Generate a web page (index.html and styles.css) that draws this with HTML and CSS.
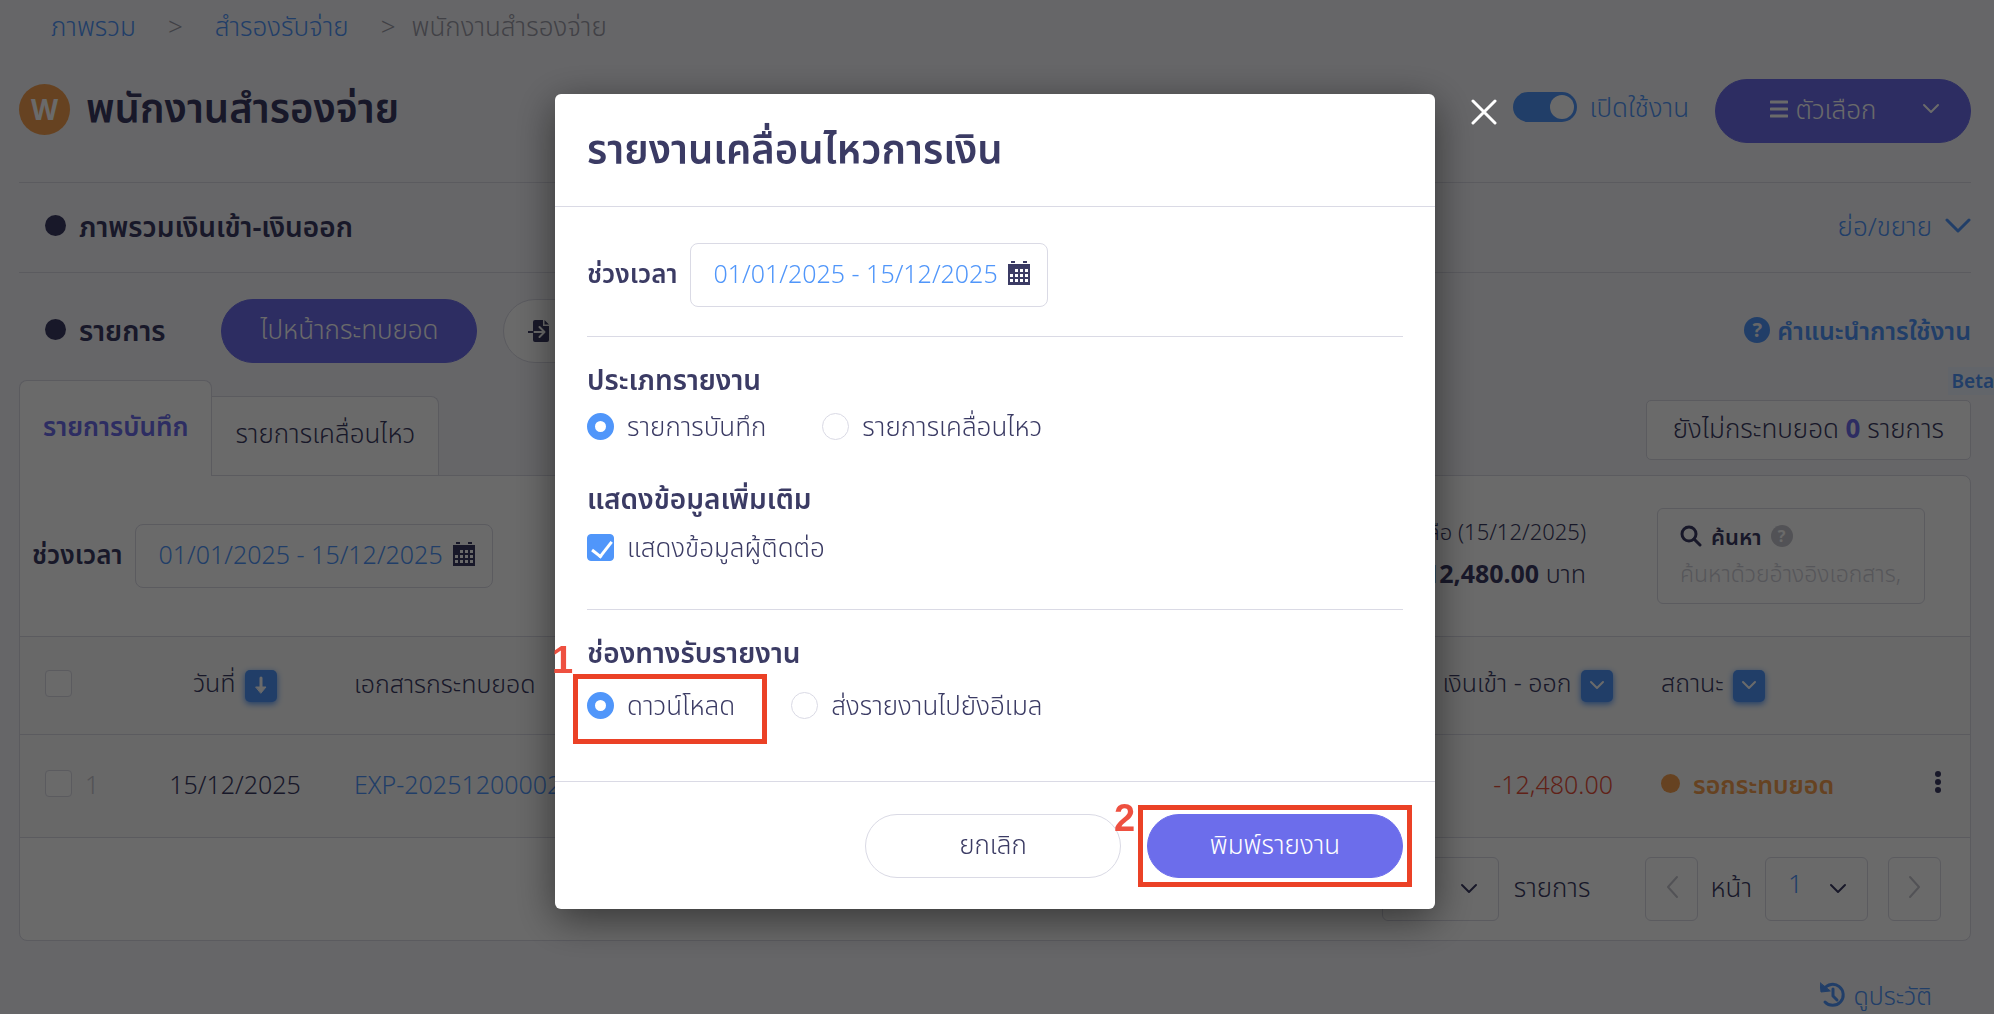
FILE: index.html
```html
<!DOCTYPE html>
<html lang="th">
<head>
    <meta charset="UTF-8">
    <meta name="viewport" content="width=device-width, initial-scale=1.0">
    <title>พนักงานสำรองจ่าย</title>
    <link rel="stylesheet" href="styles.css">
</head>
<body>

    <div class="page">
        <nav class="breadcrumb">
            <a href="#">ภาพรวม</a>
            <span class="sep">&gt;</span>
            <a href="#">สำรองรับจ่าย</a>
            <span class="sep last">&gt;</span>
            <span>พนักงานสำรองจ่าย</span>
        </nav>

        <header class="page-header">
            <span class="avatar">W</span>
            <h1>พนักงานสำรองจ่าย</h1>
            <label class="switch">
                <input type="checkbox" checked>
                <span>เปิดใช้งาน</span>
            </label>
            <button class="btn btn-primary btn-options" type="button">
                <svg width="18" height="18" viewBox="0 0 18 18"><path d="M1 2h16M1 9h16M1 16h16"/></svg>
                <span>ตัวเลือก</span>
                <svg class="caret" width="18" height="12" viewBox="0 0 18 12"><path d="M2 2l7 7 7-7"/></svg>
            </button>
        </header>

        <section class="section-row">
            <h2 class="bullet">ภาพรวมเงินเข้า-เงินออก</h2>
            <a class="toggle-link" href="#">ย่อ/ขยาย
                <svg width="26" height="18" viewBox="0 0 26 18"><path d="M2 3l11 11 11-11"/></svg>
            </a>
        </section>

        <section class="action-row">
            <h2 class="bullet">รายการ</h2>
            <button class="btn btn-primary" type="button">ไปหน้ากระทบยอด</button>
            <button class="btn btn-outline btn-import" type="button">
                <svg width="22" height="22" viewBox="0 0 22 22">
                    <path class="solid" d="M7 0h8v6h6v14a2 2 0 0 1-2 2H7a2 2 0 0 1-2-2V2a2 2 0 0 1 2-2zM16.500 0L21 4.500h-4.500z"/>
                    <path class="cut" d="M5 12h11M11.500 7l5 5-5 5"/>
                    <path class="arrow" d="M0 12h5"/>
                </svg>
                <span>นำเข้า</span>
            </button>
            <a class="help-link" href="#">
                <span class="help-dot">?</span>คำแนะนำการใช้งาน
            </a>
        </section>

        <div class="tab-row">
            <button class="tab active" type="button">รายการบันทึก</button>
            <button class="tab" type="button">รายการเคลื่อนไหว</button>
            <div class="pending">
                ยังไม่กระทบยอด <b>0</b> รายการ
                <span class="beta">Beta</span>
            </div>
        </div>

        <div class="panel">
            <div class="filters">
                <label for="page-range">ช่วงเวลา</label>
                <div class="date-box">
                    <input id="page-range" type="text" value="01/01/2025 - 15/12/2025" readonly>
                    <svg width="22" height="24" viewBox="0 0 22 24">
                        <path class="solid" d="M3 0h4v2H3zM15 0h4v2h-4zM0 3h22v21H0z"/>
                        <path class="holes" d="M7 8h3v3H7zM12 8h3v3h-3zM17 8h3v3h-3zM2 13h3v3H2zM7 13h3v3H7zM12 13h3v3h-3zM17 13h3v3h-3zM2 18h3v3H2zM7 18h3v3H7zM12 18h3v3h-3zM17 18h3v3h-3z"/>
                    </svg>
                </div>
                <div class="balance">
                    <p>ยอดคงเหลือ (15/12/2025)</p>
                    <p class="total"><b>-12,480.00</b> บาท</p>
                </div>
                <div class="search-box">
                    <label for="search">
                        <svg width="22" height="22" viewBox="0 0 22 22"><circle cx="9" cy="9" r="7"/><path d="M14 14l6 6"/></svg>
                        ค้นหา <span class="help-dot grey">?</span>
                    </label>
                    <input id="search" type="text" placeholder="ค้นหาด้วยอ้างอิงเอกสาร,">
                </div>
            </div>

            <table class="records">
                <colgroup>
                    <col class="col-check">
                    <col class="col-date">
                    <col>
                    <col class="col-amount">
                    <col class="col-status">
                    <col class="col-menu">
                </colgroup>
                <thead>
                    <tr>
                        <th class="check"><input type="checkbox" aria-label="เลือกทั้งหมด"></th>
                        <th class="date">วันที่
                            <button class="sort" type="button" aria-label="เรียงตามวันที่">
                                <svg width="16" height="20" viewBox="0 0 16 20"><path d="M8 2v10"/><path class="tip" d="M3 11h10l-5 6z"/></svg>
                            </button>
                        </th>
                        <th>เอกสารกระทบยอด</th>
                        <th class="amount">เงินเข้า - ออก
                            <button class="sort" type="button" aria-label="กรองยอดเงิน">
                                <svg width="16" height="12" viewBox="0 0 16 12"><path class="thin" d="M2 2l6 6 6-6"/></svg>
                            </button>
                        </th>
                        <th class="status">สถานะ
                            <button class="sort" type="button" aria-label="กรองสถานะ">
                                <svg width="16" height="12" viewBox="0 0 16 12"><path class="thin" d="M2 2l6 6 6-6"/></svg>
                            </button>
                        </th>
                        <th></th>
                    </tr>
                </thead>
                <tbody>
                    <tr>
                        <td class="check"><label><input type="checkbox"> 1</label></td>
                        <td class="date">15/12/2025</td>
                        <td><a href="#">EXP-20251200002</a></td>
                        <td class="amount negative">-12,480.00</td>
                        <td class="status"><span class="waiting">รอกระทบยอด</span></td>
                        <td class="menu">
                            <button class="more" type="button" aria-label="เมนู">
                                <svg width="8" height="24" viewBox="0 0 8 24"><circle cx="4" cy="4" r="3"/><circle cx="4" cy="12" r="3"/><circle cx="4" cy="20" r="3"/></svg>
                            </button>
                        </td>
                    </tr>
                </tbody>
            </table>

            <div class="pager">
                <div class="select-box per-page">
                    <select aria-label="รายการต่อหน้า"><option>20</option></select>
                    <svg width="18" height="12" viewBox="0 0 18 12"><path d="M2 2l7 7 7-7"/></svg>
                </div>
                <span class="unit">รายการ</span>
                <button class="step" type="button" aria-label="ก่อนหน้า">
                    <svg width="14" height="24" viewBox="0 0 14 24"><path d="M12 2L3 12l9 10"/></svg>
                </button>
                <label for="page-no">หน้า</label>
                <div class="select-box page-no">
                    <select id="page-no"><option>1</option></select>
                    <svg width="18" height="12" viewBox="0 0 18 12"><path d="M2 2l7 7 7-7"/></svg>
                </div>
                <button class="step next" type="button" aria-label="ถัดไป">
                    <svg width="14" height="24" viewBox="0 0 14 24"><path d="M2 2l9 10-9 10"/></svg>
                </button>
            </div>
        </div>

        <a class="history" href="#">
            <svg width="26" height="26" viewBox="0 0 26 26"><path d="M4 7a10.500 10.500 0 1 1 1 13M13 7v7l4 4"/><path class="tip" d="M0 1l1 9 9-1z"/></svg>
            ดูประวัติ
        </a>
    </div>

    <!-- Report popup -->
    <div class="overlay">
        <form class="modal">
            <button class="close" type="button" aria-label="ปิด">
                <svg width="26" height="26" viewBox="0 0 26 26"><path d="M2 2l22 22M24 2L2 24"/></svg>
            </button>

            <div class="modal-header">
                <h2>รายงานเคลื่อนไหวการเงิน</h2>
            </div>

            <div class="modal-body">
                <div class="range">
                    <label for="report-range">ช่วงเวลา</label>
                    <div class="date-box">
                        <input id="report-range" type="text" value="01/01/2025 - 15/12/2025" readonly>
                        <svg width="22" height="24" viewBox="0 0 22 24">
                            <path class="solid" d="M3 0h4v2H3zM15 0h4v2h-4zM0 3h22v21H0z"/>
                            <path class="holes" d="M7 8h3v3H7zM12 8h3v3h-3zM17 8h3v3h-3zM2 13h3v3H2zM7 13h3v3H7zM12 13h3v3h-3zM17 13h3v3h-3zM2 18h3v3H2zM7 18h3v3H7zM12 18h3v3h-3zM17 18h3v3h-3z"/>
                        </svg>
                    </div>
                </div>
                <hr>
                <h3>ประเภทรายงาน</h3>
                <div class="choices wide">
                    <label><input type="radio" name="type" checked> รายการบันทึก</label>
                    <label><input type="radio" name="type"> รายการเคลื่อนไหว</label>
                </div>
                <h3>แสดงข้อมูลเพิ่มเติม</h3>
                <div class="choices">
                    <label><input type="checkbox" checked> แสดงข้อมูลผู้ติดต่อ</label>
                </div>
                <hr>
                <h3>ช่องทางรับรายงาน</h3>
                <div class="choices channel">
                    <label class="marked"><input type="radio" name="channel" checked> ดาวน์โหลด
                        <span class="mark mark-download"></span>
                        <span class="mark-no no-download">1</span>
                    </label>
                    <label><input type="radio" name="channel"> ส่งรายงานไปยังอีเมล</label>
                </div>
            </div>

            <div class="modal-footer">
                <button class="btn btn-outline" type="button">ยกเลิก</button>
                <div class="marked">
                    <button class="btn btn-primary" type="submit">พิมพ์รายงาน</button>
                    <span class="mark mark-print"></span>
                    <span class="mark-no no-print">2</span>
                </div>
            </div>
        </form>
    </div>

</body>
</html>
```
FILE: styles.css
```css
* {
    box-sizing: border-box;
}

body {
    margin: 0;
    overflow: hidden;
    background-color: #f5f5fa;
    color: #3b3b64;
    font-family: "Noto Sans", "Noto Sans Thai", sans-serif;
    font-size: 26px;
    font-weight: 350;
    line-height: 36px;
}

h1, h2, h3, p {
    margin: 0;
}

h2, h3 {
    font-size: 28px;
    font-weight: 600;
    line-height: 40px;
}

a {
    color: #5096fa;
    text-decoration: none;
}

button, input, select {
    font: inherit;
    color: inherit;
}

button {
    cursor: pointer;
}

b {
    font-weight: 700;
}

svg {
    flex: none;
    fill: none;
    stroke: currentColor;
    stroke-width: 3;
    stroke-linecap: round;
    stroke-linejoin: round;
}

.solid {
    fill: #3b3b64;
    stroke: none;
}

.holes {
    fill: white;
    stroke: none;
}

/* Tick boxes and radios */
input[type="checkbox"], input[type="radio"] {
    appearance: none;
    flex: none;
    width: 27px;
    height: 27px;
    margin: 0;
    border: 1px solid #dadae5;
    border-radius: 4px;
    background-color: white;
}

input[type="radio"] {
    border-radius: 50%;
}

input[type="radio"]:checked {
    border: 8px solid #5096fa;
}

.choices input[type="checkbox"]:checked {
    position: relative;
    border-color: #5096fa;
    background-color: #5096fa;
}

.choices input[type="checkbox"]:checked::after {
    content: "";
    position: absolute;
    left: 8px;
    top: 2px;
    width: 9px;
    height: 17px;
    border: solid white;
    border-width: 0 3px 3px 0;
    transform: rotate(38deg);
}

/* Buttons */
.btn {
    display: flex;
    align-items: center;
    justify-content: center;
    width: 256px;
    height: 64px;
    padding: 0 0 4px;
    border: 1px solid #dadae5;
    border-radius: 32px;
    background-color: white;
}

.btn-primary {
    border-color: #6c6deb;
    background-color: #6c6deb;
    color: white;
}

/* Page */
.page {
    padding: 0 23px 0 19px;
}

.breadcrumb {
    display: flex;
    align-items: center;
    height: 52px;
    padding-left: 32px;
    color: #9c9ca8;
}

.sep {
    padding: 0 32px;
}

.sep.last {
    padding-right: 16px;
}

.page-header {
    display: flex;
    align-items: center;
    padding: 27px 0 39px;
    border-bottom: 1px solid #dadae5;
}

.avatar {
    width: 51px;
    height: 51px;
    margin: 0 16px 4px 0;
    border-radius: 50%;
    background-color: #f5a04f;
    color: white;
    font-size: 28px;
    font-weight: 700;
    line-height: 50px;
    text-align: center;
}

h1 {
    padding-bottom: 7px;
    font-size: 40px;
    font-weight: 600;
    line-height: 52px;
}

.switch {
    display: flex;
    align-items: center;
    gap: 12px;
    margin-left: auto;
    padding-bottom: 8px;
    color: #5096fa;
}

.switch input[type="checkbox"] {
    display: flex;
    justify-content: flex-end;
    width: 64px;
    height: 30px;
    padding: 3px;
    border: 0;
    border-radius: 15px;
    background-color: #5096fa;
}

.switch input::after {
    content: "";
    width: 24px;
    height: 24px;
    border-radius: 50%;
    background-color: white;
}

.btn-options {
    gap: 8px;
    margin-left: 26px;
}

.btn-options .caret {
    margin-left: 38px;
    margin-right: -24px;
    stroke-width: 2;
}

.section-row {
    display: flex;
    align-items: center;
    justify-content: space-between;
    height: 90px;
    padding-bottom: 4px;
    border-bottom: 1px solid #dadae5;
}

.bullet {
    display: flex;
    align-items: center;
    gap: 13px;
    padding-left: 26px;
}

.bullet::before {
    content: "";
    width: 21px;
    height: 21px;
    border-radius: 50%;
    background-color: #3b3b64;
}

.toggle-link {
    display: flex;
    align-items: center;
    gap: 13px;
}

.action-row {
    display: flex;
    align-items: center;
    padding: 26px 0 17px;
}

.action-row h2 {
    padding-bottom: 3px;
}

.action-row .btn-primary {
    margin: 0 26px 0 56px;
}

.btn-import {
    gap: 10px;
    justify-content: flex-start;
    padding: 0 24px;
}

.btn-import .cut {
    stroke: white;
    stroke-width: 2;
}

.btn-import .arrow {
    stroke-width: 2;
}

.help-link {
    display: flex;
    align-items: center;
    gap: 7px;
    margin-left: auto;
    padding-bottom: 2px;
    font-size: 25px;
    font-weight: 600;
}

.help-dot {
    display: inline-block;
    width: 26px;
    height: 26px;
    border-radius: 50%;
    background-color: #5096fa;
    color: #f5f5fa;
    font-size: 20px;
    font-weight: 700;
    line-height: 26px;
    text-align: center;
}

.help-dot.grey {
    width: 22px;
    height: 22px;
    background-color: #c6c6ce;
    color: white;
    font-size: 16px;
    line-height: 22px;
}

/* Tabs */
.tab-row {
    display: flex;
    align-items: flex-end;
}

.tab {
    height: 79px;
    padding: 0 23px 6px;
    border: 1px solid #dadae5;
    border-width: 1px 1px 0 0;
    border-radius: 0 8px 0 0;
    background-color: white;
}

.tab.active {
    position: relative;
    height: 96px;
    margin-bottom: -1px;
    border-width: 1px 1px 0 1px;
    border-radius: 8px 8px 0 0;
    color: #6c6deb;
    font-weight: 600;
}

.pending {
    position: relative;
    margin: 0 0 15px auto;
    padding: 9px 26px 13px;
    border: 1px solid #dadae5;
    border-radius: 5px;
    background-color: white;
}

.pending b {
    color: #6c6deb;
}

.beta {
    position: absolute;
    top: -34px;
    right: -24px;
    padding-left: 4px;
    background-color: #ebf3ff;
    color: #5096fa;
    font-size: 19px;
    font-weight: 600;
    line-height: 28px;
}

/* Records panel */
.panel {
    border: 1px solid #dadae5;
    border-radius: 0 8px 8px 8px;
    background-color: white;
}

.filters {
    display: flex;
    align-items: center;
    height: 160px;
    padding: 0 45px 0 12px;
}

.filters > label, .range > label {
    margin-right: 12px;
    padding-bottom: 4px;
    font-weight: 600;
}

.date-box {
    display: flex;
    align-items: center;
    width: 358px;
    height: 64px;
    padding: 0 17px 4px 23px;
    border: 1px solid #dadae5;
    border-radius: 8px;
}

.date-box input {
    flex: 1;
    min-width: 0;
    padding: 0;
    border: 0;
    background: none;
    color: #5096fa;
    font-size: 25px;
}

.balance {
    margin-left: auto;
    margin-right: 71px;
    padding-bottom: 8px;
    font-size: 22px;
    line-height: 42px;
    text-align: right;
}

.balance .total {
    font-size: 25px;
}

.search-box {
    width: 268px;
    height: 96px;
    padding: 9px 22px;
    border: 1px solid #dadae5;
    border-radius: 6px;
}

.search-box label {
    display: flex;
    align-items: center;
    gap: 9px;
    font-size: 22px;
    font-weight: 600;
}

.search-box input {
    width: 100%;
    padding: 0;
    border: 0;
    background: none;
    font-size: 23px;
}

.search-box input::placeholder {
    color: #cfcfd8;
}

.records {
    width: 100%;
    border-collapse: separate;
    border-spacing: 0;
    border-top: 1px solid #dadae5;
    background-color: #fafafa;
    font-size: 25px;
    table-layout: fixed;
}

.col-check {
    width: 130px;
}

.col-date {
    width: 170px;
}

.col-amount {
    width: 260px;
}

.col-status {
    width: 260px;
}

.col-menu {
    width: 65px;
}

.records th, .records td {
    height: 98px;
    padding: 0 0 5px 34px;
    border-bottom: 1px solid #dadae5;
    font-weight: inherit;
    text-align: left;
    white-space: nowrap;
}

.records td {
    height: 103px;
}

.records .check {
    padding-left: 25px;
    color: #c6c6ce;
}

.records .check label {
    display: flex;
    align-items: center;
    gap: 13px;
}

.records .check input {
    display: block;
}

.records .date {
    padding-left: 0;
    text-align: center;
}

.records .amount {
    padding-left: 0;
    padding-right: 32px;
    text-align: right;
}

.records .negative {
    color: #e8503a;
}

.records .status {
    padding-left: 16px;
}

.records .menu {
    padding-left: 0;
    text-align: center;
}

.sort {
    display: inline-flex;
    align-items: center;
    justify-content: center;
    width: 32px;
    height: 32px;
    margin-left: 3px;
    padding: 0;
    border: 0;
    border-radius: 5px;
    background-color: #5096fa;
    color: white;
    box-shadow: 0 2px 6px #5096fa;
    vertical-align: middle;
}

.sort .thin {
    stroke-width: 2;
}

.tip {
    fill: currentColor;
    stroke-width: 1;
}

.waiting {
    display: flex;
    align-items: center;
    gap: 13px;
    color: #f5a04f;
    font-weight: 600;
}

.waiting::before {
    content: "";
    width: 19px;
    height: 19px;
    border-radius: 50%;
    background-color: #f5a04f;
}

.more {
    padding: 0;
    border: 0;
    background: none;
    line-height: 0;
}

.more svg {
    fill: currentColor;
    stroke: none;
}

/* Pager */
.pager {
    display: flex;
    align-items: center;
    justify-content: flex-end;
    height: 102px;
    padding: 0 29px 0 0;
}

.select-box {
    position: relative;
    height: 64px;
}

.select-box select {
    appearance: none;
    width: 100%;
    height: 100%;
    padding: 0 22px 12px;
    border: 1px solid #dadae5;
    border-radius: 6px;
    background-color: white;
    color: #5096fa;
}

.select-box svg {
    position: absolute;
    top: 26px;
    right: 21px;
    stroke-width: 2;
    pointer-events: none;
}

.per-page {
    width: 117px;
}

.page-no {
    width: 103px;
    margin: 0 20px 0 13px;
}

.pager label, .unit {
    padding-bottom: 4px;
}

.unit {
    margin: 0 55px 0 15px;
}

.step {
    width: 53px;
    height: 64px;
    margin-right: 12px;
    padding: 0;
    border: 1px solid #dadae5;
    border-radius: 6px;
    background-color: white;
    color: #c6c6ce;
}

.step svg {
    stroke-width: 2;
}

.step.next {
    margin-right: 0;
}

.history {
    display: flex;
    align-items: center;
    justify-content: flex-end;
    gap: 7px;
    margin-top: 36px;
    padding-right: 39px;
    font-size: 25px;
}

/* Report popup */
.overlay {
    position: fixed;
    inset: 0;
    padding: 94px 4px 0 0;
    background-color: rgba(0, 0, 0, 0.585);
}

.modal {
    position: relative;
    width: 880px;
    margin: 0 auto;
    border-radius: 6px;
    background-color: white;
    box-shadow: 0 10px 40px rgba(0, 0, 0, 0.5);
}

.close {
    position: absolute;
    top: 5px;
    left: calc(100% + 36px);
    padding: 0;
    border: 0;
    background: none;
    color: white;
    line-height: 0;
}

.modal-header {
    padding: 29px 32px 31px;
    border-bottom: 1px solid #dadae5;
}

.modal-header h2 {
    font-size: 40px;
    line-height: 52px;
}

.modal-body {
    padding: 36px 32px 58px;
}

.range {
    display: flex;
    align-items: center;
}

hr {
    height: 1px;
    margin: 29px 0 22px;
    border: 0;
    background-color: #dadae5;
}

.choices {
    display: flex;
    gap: 56px;
    margin: 11px 0 44px;
}

.choices.wide {
    margin: 9px 0 34px;
}

.choices.channel {
    margin: 15px 0 0;
}

.choices label {
    display: flex;
    align-items: center;
    gap: 13px;
}

.modal-footer {
    display: flex;
    justify-content: flex-end;
    gap: 26px;
    padding: 32px 32px 31px;
    border-top: 1px solid #dadae5;
}

/* Step marks */
.marked {
    position: relative;
}

.mark {
    position: absolute;
    border: 5px solid #eb4126;
}

.mark-no {
    position: absolute;
    color: #ee5040;
    font-family: "Liberation Sans", Arial, sans-serif;
    font-size: 38px;
    font-weight: 700;
    line-height: 38px;
}

.mark-download {
    inset: -13px -32px -21px -14px;
}

.no-download {
    top: -46px;
    left: -35px;
}

.mark-print {
    inset: -9px;
}

.no-print {
    top: -15px;
    left: -33px;
}
```
